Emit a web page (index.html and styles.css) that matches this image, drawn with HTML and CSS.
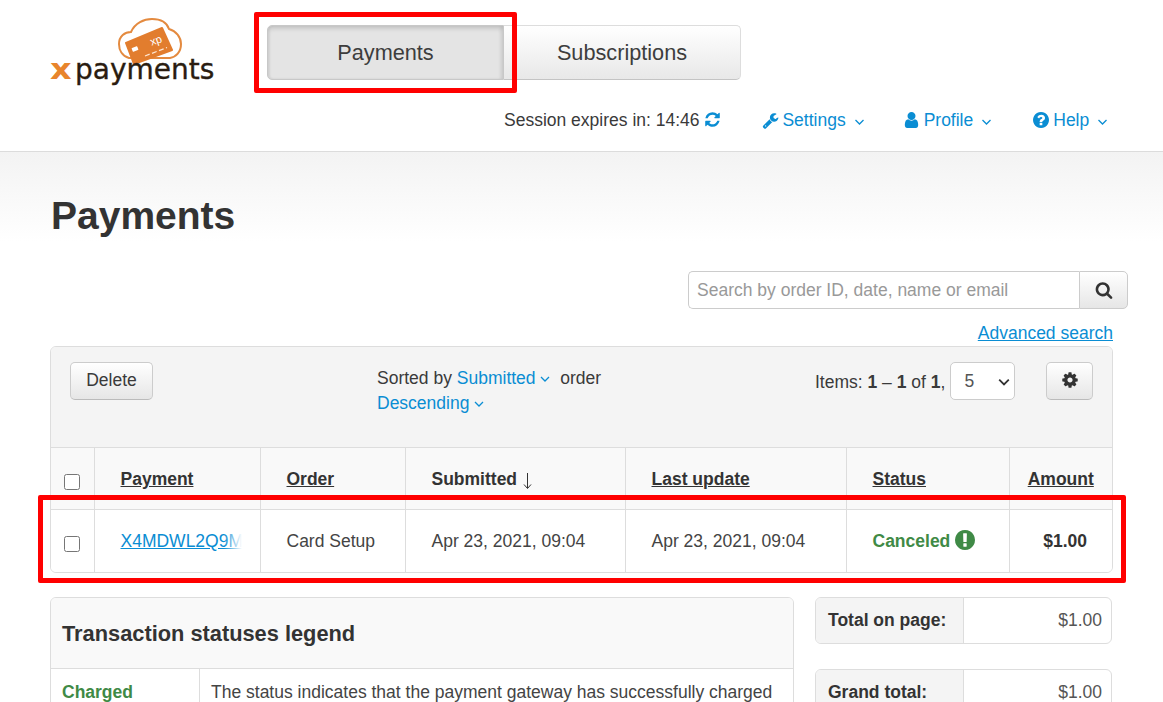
FILE: index.html
```html
<!DOCTYPE html>
<html lang="en">
<head>
<meta charset="utf-8">
<title>Payments</title>
<link rel="stylesheet" href="styles.css">
</head>
<body>
<header class="top">
  <div class="top-row">
    <a class="logo">
      <svg class="cloud" viewBox="0 0 64 46" width="64" height="46">
        <path d="M11 40C4 38 1 32 1 26C1 18 7 14 13 14C17 5 26 1 34 1C43 1 49 5 51 11C58 13 63 19 63 26C63 34 58 39 52 40Z" fill="#fff" stroke="#e48a3f" stroke-width="2"/>
        <path d="M8 25L44 10L54 32L16 46Z" fill="#e27d2e" stroke="#e27d2e" stroke-width="2" stroke-linejoin="round"/>
        <rect x="14" y="29" width="6" height="4" rx=".6" fill="#fff" transform="rotate(-20 17 31)"/>
        <path d="M27 38L49 29.500" stroke="#fde6d2" stroke-width="1.300" stroke-dasharray="5 2.500" fill="none"/>
        <text x="32" y="26" class="card-text" transform="rotate(-20 38 22)">xp</text>
      </svg>
      <span class="wordmark"><span class="wordmark-x">x</span>payments</span>
    </a>
    <nav class="tabs">
      <a class="tab tab-active">Payments</a>
      <a class="tab">Subscriptions</a>
    </nav>
  </div>
  <div class="nav-row">
    <span class="session">Session expires in: 14:46
      <svg class="ic link-ic" viewBox="0 0 1792 1792"><path d="M1639 1056q0 5-1 7-64 268-268 434.5t-478 166.5q-146 0-282.5-55t-243.5-157l-129 129q-19 19-45 19t-45-19-19-45v-448q0-26 19-45t45-19h448q26 0 45 19t19 45-19 45l-137 137q71 66 161 102t187 36q134 0 250-65t186-179q11-17 53-117 8-23 30-23h192q13 0 22.5 9.5t9.5 22.5zm25-800v448q0 26-19 45t-45 19h-448q-26 0-45-19t-19-45 19-45l138-138q-148-137-349-137-134 0-250 65t-186 179q-11 17-53 117-8 23-30 23h-199q-13 0-22.5-9.500t-9.500-22.500v-7q65-268 270-434.500t480-166.500q146 0 284 55.500t245 156.500l130-129q19-19 45-19t45 19 19 45z"/></svg>
    </span>
    <a class="nav-link nav-settings">
      <svg class="ic" viewBox="0 0 1792 1792"><path d="M448 1472q0-26-19-45t-45-19-45 19-19 45 19 45 45 19 45-19 19-45zm644-420l-682 682q-37 37-90 37-52 0-91-37l-106-108q-38-36-38-90 0-53 38-91l681-681q39 98 114.500 173.500t173.500 114.500zm634-435q0 39-23 106-47 134-164.500 217.500t-258.500 83.500q-185 0-316.500-131.500t-131.500-316.500 131.500-316.500 316.500-131.500q58 0 121.500 16.500t107.500 46.500q16 11 16 28t-16 28l-293 169v224l193 107q5-3 79-48.500t135.500-81 70.500-35.500q15 0 23.500 10t8.500 25z"/></svg>
      <span>Settings</span><svg class="chev chev-nav" viewBox="0 0 10 6"><path d="M1 1l4 4 4-4"/></svg></a>
    <a class="nav-link nav-profile">
      <svg class="ic ic-user" viewBox="256 128 1280 1536"><path d="M1536 1399q0 109-62.500 187t-150.500 78h-854q-88 0-150.500-78t-62.500-187q0-85 8.500-160.500t31.500-152 58.500-131 94-89 134.500-34.500q131 128 313 128t313-128q76 0 134.500 34.500t94 89 58.500 131 31.500 152 8.500 160.500zm-256-887q0 159-112.500 271.500t-271.500 112.500-271.500-112.500-112.500-271.500 112.500-271.500 271.500-112.500 271.500 112.500 112.500 271.500z"/></svg>
      <span>Profile</span><svg class="chev chev-nav" viewBox="0 0 10 6"><path d="M1 1l4 4 4-4"/></svg></a>
    <a class="nav-link nav-help">
      <svg class="ic ic-help" viewBox="128 128 1536 1536"><path d="M1024 1376v-192q0-14-9-23t-23-9h-192q-14 0-23 9t-9 23v192q0 14 9 23t23 9h192q14 0 23-9t9-23zm256-672q0-88-55.500-163t-138.500-116-170-41q-243 0-371 213-15 24 8 42l132 100q7 6 19 6 16 0 25-12 53-68 86-92 34-24 86-24 48 0 85.500 26t37.500 59q0 38-20 61t-68 45q-63 28-115.500 86.500t-52.500 125.500v36q0 14 9 23t23 9h192q14 0 23-9t9-23q0-19 21.500-49.500t54.500-49.500q32-18 49-28.500t46-35 44.500-48 28-60.500 12.500-81zm384 192q0 209-103 385.500t-279.500 279.500-385.500 103-385.500-103-279.500-279.500-103-385.500 103-385.500 279.500-279.500 385.500-103 385.500 103 279.500 279.500 103 385.500z"/></svg>
      <span>Help</span><svg class="chev chev-nav" viewBox="0 0 10 6"><path d="M1 1l4 4 4-4"/></svg></a>
  </div>
</header>

<section class="page-head"><h1>Payments</h1></section>

<main class="content">
  <form class="search">
    <input class="search-input" type="text" placeholder="Search by order ID, date, name or email">
    <button class="search-btn" type="button"><svg class="ic-search" viewBox="0 0 1792 1792"><path d="M1216 832q0-185-131.500-316.500t-316.500-131.500-316.500 131.500-131.500 316.500 131.500 316.500 316.500 131.500 316.500-131.500 131.500-316.500zm512 832q0 52-38 90t-90 38q-54 0-90-38l-343-342q-179 124-399 124-143 0-273.500-55.500t-225-150-150-225-55.500-273.500 55.500-273.500 150-225 225-150 273.500-55.500 273.500 55.500 225 150 150 225 55.500 273.500q0 220-124 399l343 343q37 37 37 90z"/></svg></button>
  </form>
  <div class="adv"><a class="adv-link">Advanced search</a></div>

  <div class="grid-box">
    <div class="toolbar">
      <button class="btn btn-delete" type="button">Delete</button>
      <div class="sort">Sorted by <a class="sort-link">Submitted <svg class="chev" viewBox="0 0 10 6"><path d="M1 1l4 4 4-4"/></svg></a>&nbsp; order<br><a class="sort-link">Descending <svg class="chev" viewBox="0 0 10 6"><path d="M1 1l4 4 4-4"/></svg></a></div>
      <div class="items">Items: <b>1</b> – <b>1</b> of <b>1</b>,</div>
      <div class="select-wrap">
        <select class="per-page"><option>5</option></select>
        <svg class="chev chev-select" viewBox="0 0 10 6"><path d="M1 1l4 4 4-4"/></svg>
      </div>
      <button class="btn btn-gear" type="button"><svg class="ic-gear" viewBox="0 0 1792 1792"><path d="M1152 896q0-106-75-181t-181-75-181 75-75 181 75 181 181 75 181-75 75-181zm512-109v222q0 12-8 23t-20 13l-185 28q-19 54-39 91 35 50 107 138 10 12 10 25t-9 23q-27 37-99 108t-94 71q-12 0-26-9l-138-108q-44 23-91 38-16 136-29 186-7 28-36 28h-222q-14 0-24.500-8.500t-11.500-21.500l-28-184q-49-16-90-37l-141 107q-10 9-25 9-14 0-25-11-126-114-165-168-7-10-7-23 0-12 8-23 15-21 51-66.500t54-70.500q-27-50-41-99l-183-27q-13-2-21-12.500t-8-23.500v-222q0-12 8-23t19-13l186-28q14-46 39-92-40-57-107-138-10-12-10-24 0-10 9-23 26-36 98.500-107.500t94.500-71.500q13 0 26 10l138 107q44-23 91-38 16-136 29-186 7-28 36-28h222q14 0 24.500 8.500t11.500 21.500l28 184q49 16 90 37l142-107q9-9 24-9 13 0 25 10 129 119 165 170 7 8 7 22 0 12-8 23-15 21-51 66.500t-54 70.500q26 50 41 98l183 28q13 2 21 12.500t8 23.500z"/></svg></button>
    </div>
    <table class="grid">
      <colgroup>
        <col class="c-check"><col class="c-pay"><col class="c-order"><col class="c-sub"><col class="c-upd"><col class="c-status"><col class="c-amt">
      </colgroup>
      <thead>
        <tr>
          <th class="cell-check"><input type="checkbox" class="check"></th>
          <th><span class="sortable">Payment</span></th>
          <th><span class="sortable">Order</span></th>
          <th>Submitted <svg class="arrow" viewBox="0 0 9 16"><path d="M4.500 0v15M1 11.500l3.500 4 3.500-4"/></svg></th>
          <th><span class="sortable">Last update</span></th>
          <th><span class="sortable">Status</span></th>
          <th class="cell-amt"><span class="sortable">Amount</span></th>
        </tr>
      </thead>
      <tbody>
        <tr>
          <td class="cell-check"><input type="checkbox" class="check"></td>
          <td class="cell-id"><a class="id-link">X4MDWL2Q9MTK</a></td>
          <td>Card Setup</td>
          <td>Apr 23, 2021, 09:04</td>
          <td>Apr 23, 2021, 09:04</td>
          <td class="status">Canceled <svg class="ic-status" viewBox="128 128 1536 1536"><path d="M896 128q209 0 385.500 103t279.500 279.500 103 385.500-103 385.500-279.500 279.500-385.500 103-385.500-103-279.500-279.500-103-385.500 103-385.500 279.500-279.500 385.500-103zm128 1247v-190q0-14-9-23.500t-22-9.500h-192q-13 0-23 10t-10 23v190q0 13 10 23t23 10h192q13 0 22-9.500t9-23.500zm-2-344l18-621q0-12-10-18-10-8-24-8h-220q-14 0-24 8-10 6-10 18l17 621q0 10 10 17.500t24 7.500h185q14 0 23.500-7.500t10.500-17.500z"/></svg></td>
          <td class="amount">$1.00</td>
        </tr>
      </tbody>
    </table>
  </div>

  <div class="bottom">
    <section class="legend">
      <h2 class="legend-title">Transaction statuses legend</h2>
      <div class="legend-row">
        <div class="legend-name">Charged</div>
        <div class="legend-text">The status indicates that the payment gateway has successfully charged the buyer's card for the order.</div>
      </div>
    </section>
    <aside class="totals">
      <div class="total-box"><div class="total-label">Total on page:</div><div class="total-value">$1.00</div></div>
      <div class="total-box"><div class="total-label">Grand total:</div><div class="total-value">$1.00</div></div>
    </aside>
  </div>
</main>

<div class="mark mark-tab"></div>
<div class="mark mark-row"></div>
</body>
</html>
```

FILE: styles.css
```css
* { box-sizing: border-box; }
html { overflow: hidden; height: 702px; }
body {
  margin: 0;
  height: 702px;
  overflow: hidden;
  position: relative;
  background: #fff;
  color: #333;
  font-family: "Liberation Sans", Arial, sans-serif;
  font-size: 17.5px;
  line-height: 25px;
}
a { color: #0a8dd3; text-decoration: none; }

/* header */
.top { height: 152px; padding: 18px 50px 0; border-bottom: 1px solid #dcdcdc; }
.top-row { display: flex; align-items: flex-start; }
.logo { display: flex; flex-direction: column; width: 163px; flex: none; }
.cloud { display: block; margin-left: 68px; }
.card-text { font-family: "Liberation Sans", Arial, sans-serif; font-size: 11px; fill: #fff; }
.wordmark {
  display: block;
  margin-top: -12px;
  font-family: "DejaVu Sans", sans-serif;
  font-size: 28px;
  line-height: 36px;
  color: #2a1c10;
  -webkit-text-stroke: .35px #2a1c10;
  white-space: nowrap;
}
.wordmark-x {
  display: inline-block;
  width: 25px;
  color: #e8852c;
  font-weight: 700;
  -webkit-text-stroke: 0;
  transform: scaleX(1.2);
  transform-origin: left center;
}
.tabs { display: flex; margin: 7px 0 0 54px; }
.tab {
  width: 237px;
  height: 55px;
  display: flex;
  align-items: center;
  justify-content: center;
  font-size: 21.7px;
  color: #3d3d3d;
  border: 1px solid #ddd;
  border-left: 0;
  border-bottom-color: #c4c4c4;
  border-radius: 0 5px 5px 0;
  background: linear-gradient(#fff, #e8e8e8);
}
.tab-active {
  border: 1px solid #c8c8c8;
  border-radius: 5px 0 0 5px;
  background: #e4e4e4;
  box-shadow: inset 0 3px 4px rgba(0,0,0,.12), inset -3px 0 3px rgba(0,0,0,.06), inset 2px 0 2px rgba(0,0,0,.04);
}
.nav-row { display: flex; align-items: center; height: 25px; margin-top: 20px; padding-left: 454px; }
.session { color: #3a3a3a; white-space: nowrap; }
.ic { width: 17px; height: 17px; fill: #0a8dd3; vertical-align: -2px; flex: none; }
.ic-user { width: 15px; height: 16px; margin: -1px 2px 0 0; }
.ic-help { width: 16px; height: 16px; margin: -1px 1px 0 0; }
.nav-link { display: flex; align-items: center; gap: 3px; white-space: nowrap; }
.nav-settings { margin-left: 41px; }
.nav-profile { margin-left: 39px; }
.nav-help { margin-left: 41px; }
.chev { width: 10px; height: 6px; fill: none; stroke: #0a8dd3; stroke-width: 1.300; vertical-align: 2px; }
.nav-link .chev-nav { width: 11px; margin-left: 5px; margin-top: 2px; }

/* heading */
.page-head { height: 90px; padding: 42px 51px 0; background: linear-gradient(#f3f3f3, #fff); }
h1 { margin: 0; font-size: 39px; line-height: 44px; font-weight: 700; color: #333; }

/* search */
.content { padding: 29px 50px 0; }
.search { display: flex; justify-content: flex-end; margin-right: -15px; height: 38px; }
.search-input {
  width: 391px;
  height: 38px;
  padding: 0 8px;
  border: 1px solid #ccc;
  border-right: 0;
  border-radius: 5px 0 0 5px;
  font: 17.5px "Liberation Sans", Arial, sans-serif;
  color: #333;
  background: #fff;
  outline: 0;
}
.search-input::placeholder { color: #999; opacity: 1; }
.search-btn {
  width: 49px;
  height: 38px;
  padding: 0;
  border: 1px solid #ccc;
  border-radius: 0 5px 5px 0;
  background: linear-gradient(#fff, #e6e6e6);
  display: flex;
  align-items: center;
  justify-content: center;
}
.ic-search { width: 18px; height: 18px; fill: #333; }
.adv { text-align: right; height: 25px; margin-top: 12px; }
.adv-link { text-decoration: underline; }

/* grid */
.grid-box { border: 1px solid #ddd; border-radius: 6px; overflow: hidden; }
.toolbar { display: flex; align-items: flex-start; height: 100px; padding: 15px 19px 0; background: #f4f4f4; }
.btn {
  height: 38px;
  padding: 0;
  border: 1px solid #ccc;
  border-bottom-color: #bbb;
  border-radius: 5px;
  background: linear-gradient(#fff, #e6e6e6);
  font: 17.5px "Liberation Sans", Arial, sans-serif;
  color: #3a3a3a;
}
.btn-delete { width: 83px; flex: none; padding-bottom: 2px; }
.sort { width: 438px; flex: none; margin-left: 224px; padding-top: 4px; color: #3a3a3a; }
.sort-link { white-space: nowrap; }
.items { flex: none; padding-top: 8px; white-space: nowrap; color: #3a3a3a; }
.select-wrap { position: relative; flex: none; width: 65px; height: 38px; margin-left: 5px; }
.per-page {
  width: 65px;
  height: 38px;
  padding: 0 13px;
  appearance: none;
  border: 1px solid #ccc;
  border-radius: 5px;
  background: #fff;
  font: 17.5px "Liberation Sans", Arial, sans-serif;
  color: #555;
}
.chev-select { position: absolute; right: 5px; top: 16px; width: 12px; height: 8px; stroke: #333; stroke-width: 1.500; }
.btn-gear { width: 47px; flex: none; margin-left: 31px; display: flex; align-items: flex-start; justify-content: center; padding-top: 8px; }
.ic-gear { width: 18px; height: 18px; fill: #333; }

.grid { width: 100%; border-collapse: collapse; table-layout: fixed; background: #fff; }
.c-check { width: 43px; }
.c-pay { width: 166px; }
.c-order { width: 145px; }
.c-sub { width: 220px; }
.c-upd { width: 221px; }
.c-status { width: 163px; }
.grid th, .grid td {
  padding: 2px 0 0 26px;
  border-left: 1px solid #ddd;
  border-top: 1px solid #ddd;
  text-align: left;
  white-space: nowrap;
  color: #444;
  font-weight: 400;
}
.grid th:first-child, .grid td:first-child { border-left: 0; padding: 0; text-align: center; }
.grid th { height: 62px; background: #f9f9f9; color: #333; font-weight: 700; }
.grid td { height: 62px; }
.grid .cell-amt { padding: 2px 0 0; text-align: center; }
.sortable { text-decoration: underline; }
.arrow { width: 9px; height: 16px; fill: none; stroke: #333; stroke-width: 1; vertical-align: -4px; margin-left: 1px; }
.check { width: 16px; height: 16px; margin: 5px 0 0; vertical-align: middle; }
.grid td .check { margin-top: 4px; }
.grid .cell-id { position: relative; overflow: hidden; }
.cell-id::after {
  content: "";
  position: absolute;
  top: 0;
  right: 0;
  bottom: 0;
  width: 36px;
  background: linear-gradient(to right, rgba(255,255,255,0), #fff 50%);
}
.id-link { text-decoration: underline; }
.grid .status { color: #3f8a46; font-weight: 700; }
.ic-status { width: 20px; height: 20px; fill: #3f8a46; vertical-align: -3px; }
.grid .amount { color: #333; font-weight: 700; padding: 2px 25px 0 0; text-align: right; }

/* bottom */
.bottom { display: flex; gap: 21px; margin-top: 24px; align-items: flex-start; }
.legend { width: 744px; flex: none; border: 1px solid #ddd; border-radius: 6px; overflow: hidden; }
.legend-title { margin: 0; height: 71px; padding: 2px 11px 0; display: flex; align-items: center; background: #f9f9f9; border-bottom: 1px solid #ddd; font-size: 21.8px; font-weight: 700; color: #333; }
.legend-row { display: flex; }
.legend-name { width: 148px; flex: none; padding: 11px; color: #3f8a46; font-weight: 700; }
.legend-text { padding: 11px; border-left: 1px solid #ddd; color: #444; }
.totals { width: 297px; flex: none; display: flex; flex-direction: column; gap: 25px; }
.total-box { display: flex; height: 47px; border: 1px solid #ddd; border-radius: 6px; overflow: hidden; }
.total-label { width: 148px; flex: none; padding: 10px 12px; background: #f4f4f4; border-right: 1px solid #ddd; font-weight: 700; white-space: nowrap; }
.total-value { flex: 1; padding: 10px 9px; text-align: right; color: #555; }

/* annotations drawn over the screenshot */
.mark { position: absolute; border: 5px solid #f00; border-radius: 2px; pointer-events: none; }
.mark-tab { left: 254px; top: 12px; width: 263px; height: 81px; }
.mark-row { left: 38px; top: 495px; width: 1088px; height: 88px; }
```
